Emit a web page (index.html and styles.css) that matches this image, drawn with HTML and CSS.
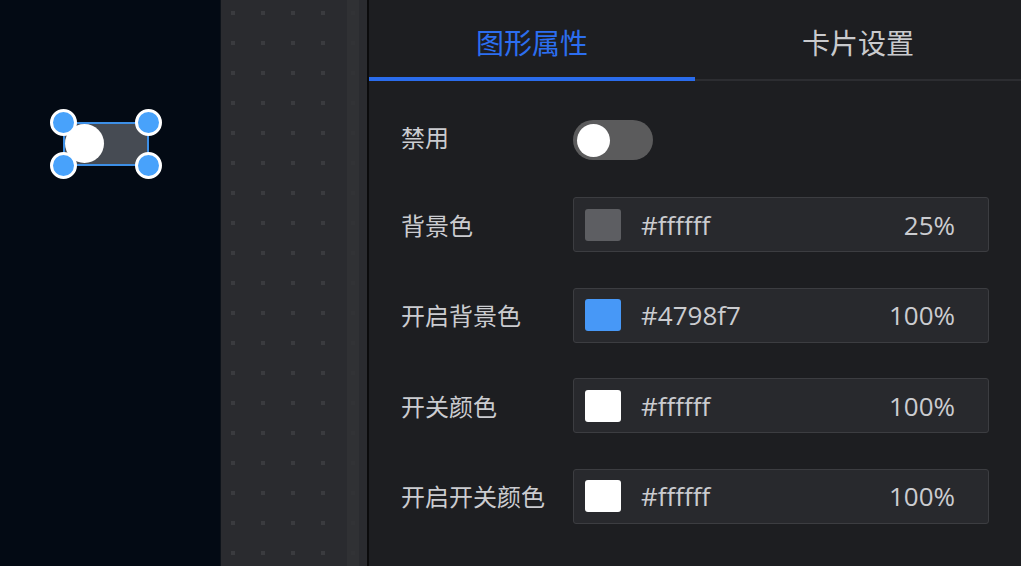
FILE: index.html
```html
<!DOCTYPE html>
<html lang="zh-CN">
<head>
<meta charset="utf-8">
<title>图形属性</title>
<link rel="stylesheet" href="styles.css">
</head>
<body>
<div class="app">
  <div class="stage">
    <div class="shape">
      <div class="shape-knob"></div>
      <span class="handle h-tl"></span>
      <span class="handle h-tr"></span>
      <span class="handle h-bl"></span>
      <span class="handle h-br"></span>
    </div>
  </div>
  <div class="canvas">
    <div class="scroll-track"></div>
  </div>
  <div class="panel">
    <div class="tabs">
      <div class="tab active">图形属性</div>
      <div class="tab">卡片设置</div>
    </div>
    <div class="form">
      <div class="row row-toggle">
        <div class="label">禁用</div>
        <div class="toggle"><span class="toggle-knob"></span></div>
      </div>
      <div class="row">
        <div class="label">背景色</div>
        <div class="color-input">
          <span class="swatch swatch-gray"></span>
          <span class="hex">#ffffff</span>
          <span class="pct">25%</span>
        </div>
      </div>
      <div class="row">
        <div class="label">开启背景色</div>
        <div class="color-input">
          <span class="swatch swatch-blue"></span>
          <span class="hex">#4798f7</span>
          <span class="pct">100%</span>
        </div>
      </div>
      <div class="row">
        <div class="label">开关颜色</div>
        <div class="color-input">
          <span class="swatch swatch-white"></span>
          <span class="hex">#ffffff</span>
          <span class="pct">100%</span>
        </div>
      </div>
      <div class="row">
        <div class="label">开启开关颜色</div>
        <div class="color-input">
          <span class="swatch swatch-white"></span>
          <span class="hex">#ffffff</span>
          <span class="pct">100%</span>
        </div>
      </div>
    </div>
  </div>
</div>
</body>
</html>
```

FILE: styles.css
```css
* { box-sizing: border-box; }
html, body {
  margin: 0;
  padding: 0;
  width: 1021px;
  height: 566px;
  overflow: hidden;
  background: #1d1e21;
  font-family: "Noto Sans CJK SC", "Open Sans", sans-serif;
}
.app {
  display: flex;
  width: 1021px;
  height: 566px;
}
.stage {
  position: relative;
  flex: none;
  width: 221px;
  background: #030a14;
  border-right: 1px solid #0e131a;
}
.shape {
  position: absolute;
  left: 63px;
  top: 122px;
  width: 86px;
  height: 44px;
  background: #464b53;
  border: 2px solid #3d8fe6;
}
.shape-knob {
  position: absolute;
  left: 0;
  top: 0;
  width: 39px;
  height: 39px;
  border-radius: 50%;
  background: #ffffff;
}
.handle {
  position: absolute;
  width: 27px;
  height: 27px;
  border-radius: 50%;
  background: #48a2fb;
  border: 3px solid #ffffff;
}
.h-tl { left: -15px; top: -15px; }
.h-tr { right: -15px; top: -15px; }
.h-bl { left: -15px; bottom: -15px; }
.h-br { right: -15px; bottom: -15px; }

.canvas {
  position: relative;
  width: 148px;
  flex: none;
  background-color: #2a2b2f;
  background-image: conic-gradient(at 4px 4px, transparent 75%, #3a3b3f 0);
  background-size: 30px 30px;
  background-position: 10px 11px;
  border-right: 2px solid #0b0b0c;
}
.scroll-track {
  position: absolute;
  top: 0;
  bottom: 0;
  left: 126px;
  width: 12px;
  background: rgba(49, 50, 53, 0.85);
}

.panel {
  flex: 1;
  display: flex;
  flex-direction: column;
  background: #1d1e21;
}
.tabs {
  display: flex;
  height: 81px;
}
.tab {
  flex: 1;
  height: 81px;
  text-align: center;
  font-size: 28px;
  line-height: 40px;
  padding-top: 22px;
  color: #c9cacd;
  border-bottom: 2px solid #2c2d31;
}
.tab.active {
  color: #2c6ef0;
  border-bottom: 4px solid #2a6cec;
}

.form {
  display: flex;
  flex-direction: column;
  padding: 39px 32px 0 32px;
}
.row {
  display: flex;
  align-items: center;
  height: 55px;
  margin-bottom: 35.6px;
}
.row-toggle {
  height: 40px;
  margin-bottom: 37px;
}
.row-toggle .label {
  margin-bottom: 7px;
}
.label {
  width: 172px;
  flex: none;
  font-size: 24px;
  line-height: 34px;
  color: #cbccd0;
}
.toggle {
  position: relative;
  width: 80px;
  height: 40px;
  border-radius: 20px;
  background: #5b5b5c;
}
.toggle-knob {
  position: absolute;
  left: 4px;
  top: 3.5px;
  width: 33px;
  height: 33px;
  border-radius: 50%;
  background: #ffffff;
}
.color-input {
  flex: 1;
  display: flex;
  align-items: center;
  height: 55px;
  padding: 0 33px 0 11px;
  background: #28292d;
  border: 1px solid #3c3d41;
  border-radius: 3px;
  font-family: "Open Sans", "Noto Sans CJK SC", sans-serif;
  font-size: 26px;
  color: #cbccd0;
}
.swatch {
  width: 36px;
  height: 32px;
  border-radius: 3px;
  flex: none;
  margin-right: 20px;
}
.swatch-gray { background: #5d5e62; }
.swatch-blue { background: #4798f7; }
.swatch-white { background: #ffffff; }
.hex {
  flex: 1;
  line-height: 36px;
}
.pct {
  line-height: 36px;
}
```
